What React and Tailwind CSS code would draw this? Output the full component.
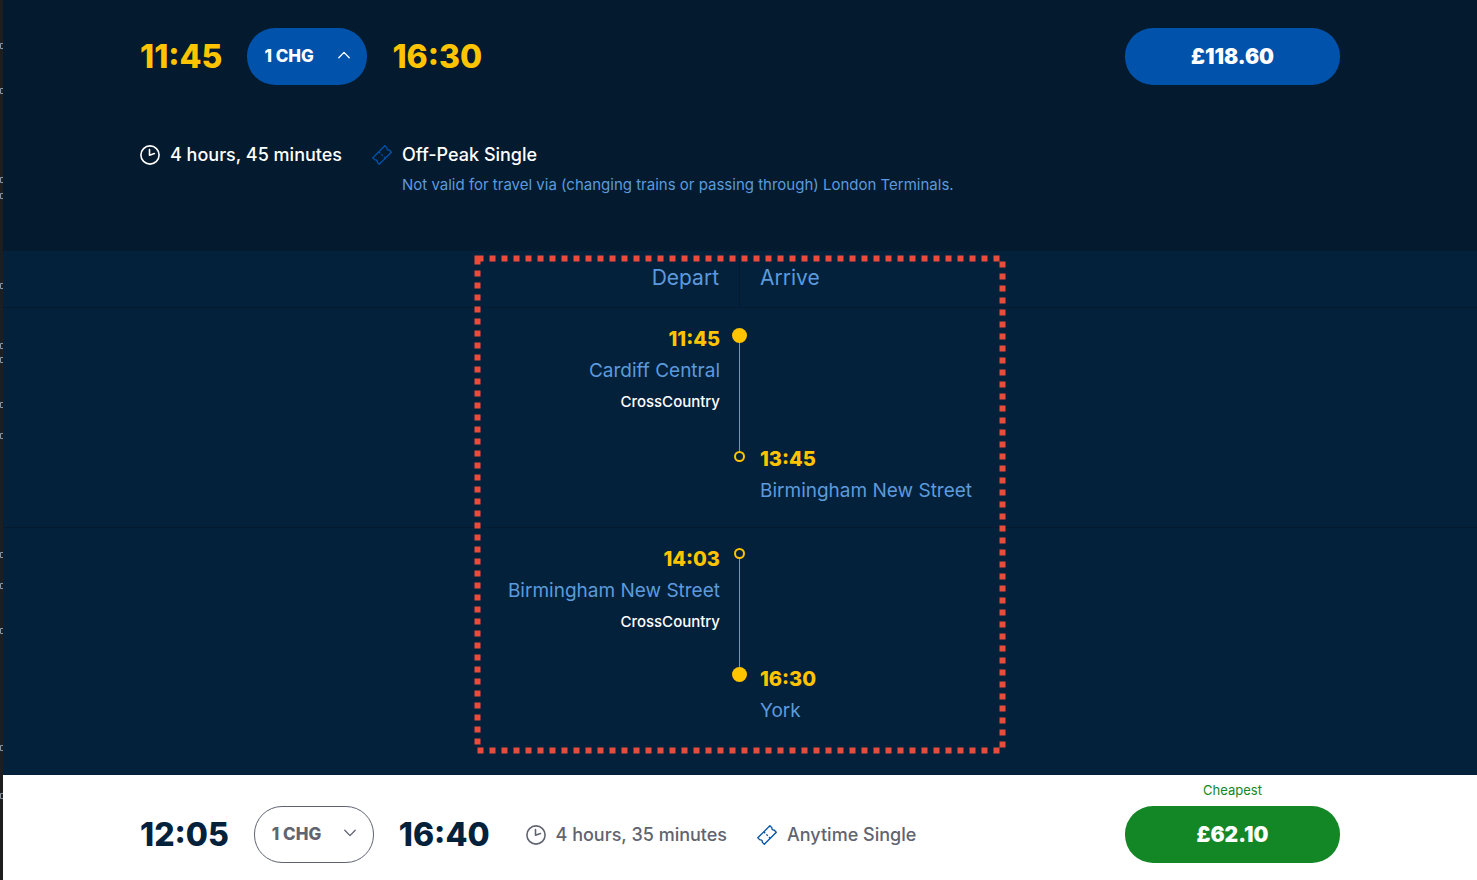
import React from "react";

function ClockIcon() {
  return (
    <svg className="size-5 shrink-0" viewBox="0 0 20 20" fill="none" stroke="currentColor" strokeWidth="1.6" strokeLinecap="round" strokeLinejoin="round" aria-hidden="true">
      <circle cx="10" cy="10" r="9.1" />
      <path d="M9.5 4.6V10.2L14.4 8.6" />
    </svg>
  );
}

function TicketIcon() {
  return (
    <svg className="size-5 shrink-0 text-[#0052aa]" viewBox="0 0 20 20" fill="none" stroke="currentColor" strokeWidth="1.3" strokeLinejoin="round" aria-hidden="true">
      <path d="M12.9 0.8L15 2.9C14.6 4 15.6 5.4 17.1 5L19.3 7.2L7.3 19.2L5.2 17.1C5.6 15.8 4.4 14.4 2.9 14.9L0.8 12.8Z" />
      <path d="M6.9 6.9L8.2 8.2M9.4 9.4L10.8 10.8M12 12L13.2 13.2" />
    </svg>
  );
}

function Chevron({ up }) {
  return (
    <svg className="mb-1 h-2 w-3 shrink-0" viewBox="0 0 12 8" fill="none" stroke="currentColor" strokeWidth="1.3" strokeLinecap="round" strokeLinejoin="round" aria-hidden="true">
      <path d={up ? "M0.8 6.8L6 1.4L11.2 6.8" : "M0.8 1.2L6 6.6L11.2 1.2"} />
    </svg>
  );
}

function ChangeButton({ expanded, className }) {
  return (
    <button
      type="button"
      aria-expanded={expanded}
      className={`flex h-[57px] w-[120px] shrink-0 items-center justify-between rounded-[28px] px-[17px] text-[17px] font-extrabold ${className}`}
    >
      1 CHG
      <Chevron up={expanded} />
    </button>
  );
}

function PriceButton({ children, className }) {
  return (
    <button type="button" className={`h-[57px] w-[215px] rounded-[28px] text-[21px] font-black text-white ${className}`}>
      {children}
    </button>
  );
}

function Time({ children }) {
  return <time className="text-[32px] leading-[57px] font-extrabold">{children}</time>;
}

function Stop({ time, station, operator }) {
  return (
    <div>
      <time className="block text-[20px] leading-[31px] font-extrabold text-[#ffc400]">{time}</time>
      <p className="text-[19px] leading-[31px] text-[#5c9add]">{station}</p>
      {operator && <p className="text-[15px] leading-[31px] font-medium text-white">{operator}</p>}
    </div>
  );
}

function Terminus() {
  return <span className="size-[15px] shrink-0 rounded-full bg-[#ffc400]" />;
}

function Interchange() {
  return <span className="size-[11px] shrink-0 rounded-full border-2 border-[#ffc400]" />;
}

function Leg({ from, to, startsTrip, endsTrip, className }) {
  return (
    <li className={`grid grid-cols-[1fr_40px_1fr] pt-4 ${className}`}>
      <div className="text-right">
        <Stop {...from} />
      </div>
      <div className="row-span-2 ml-3 flex w-[15px] flex-col items-center pt-1 pb-11">
        {startsTrip ? <Terminus /> : <Interchange />}
        <span className="w-px grow bg-[#5c9add]" />
        {endsTrip ? <Terminus /> : <Interchange />}
      </div>
      <div />
      <div />
      <div className="pt-[27px]">
        <Stop {...to} />
      </div>
    </li>
  );
}

const EDGE_MARKS = [43, 88, 177, 193, 283, 343, 357, 402, 433, 552, 583, 628, 745, 793];

export default function App() {
  return (
    <div className="flex min-h-screen bg-[#1e1e1e] font-['Inter','Liberation_Sans',sans-serif] text-base">
      <svg className="h-[880px] w-[3px] shrink-0" viewBox="0 0 3 880" fill="none" stroke="#8795a3" aria-hidden="true">
        {EDGE_MARKS.map((y) => (
          <path key={y} d={`M3 ${y}.5H0.5V${y + 5}.5H3`} />
        ))}
      </svg>
      <main className="flex min-w-0 grow flex-col bg-white">
        <section className="bg-[#041a2e] px-6 pt-7 pb-[51px]">
          <div className="mx-auto max-w-[1200px]">
            <div className="flex items-center gap-[25px] text-[#ffc400]">
              <Time>11:45</Time>
              <ChangeButton expanded className="bg-[#0052aa] text-white" />
              <Time>16:30</Time>
              <div className="ml-auto">
                <PriceButton className="bg-[#0052aa]">£118.60</PriceButton>
              </div>
            </div>
            <div className="mt-[55px] flex gap-[30px] text-[18px] leading-[30px] font-medium text-white">
              <p className="flex h-[30px] items-center gap-[10px]">
                <ClockIcon />
                4 hours, 45 minutes
              </p>
              <div className="flex gap-[10px]">
                <span className="flex h-[30px] items-center">
                  <TicketIcon />
                </span>
                <div>
                  <p>Off-Peak Single</p>
                  <p className="text-[15px] leading-[30px] font-normal text-[#5c9add]">
                    Not valid for travel via (changing trains or passing through) London Terminals.
                  </p>
                </div>
              </div>
            </div>
          </div>
        </section>

        <section className="relative bg-[#04213b] pb-[3px]">
          <div className="grid h-[57px] grid-cols-2 border-b border-[#041a30] text-[21px] leading-[54px] text-[#5c9add]">
            <h2 className="border-r border-[#041a30] pr-5 text-right">Depart</h2>
            <h2 className="pl-5">Arrive</h2>
          </div>
          <ol>
            <Leg
              startsTrip
              className="border-b border-[#041a30] pb-[21px]"
              from={{ time: "11:45", station: "Cardiff Central", operator: "CrossCountry" }}
              to={{ time: "13:45", station: "Birmingham New Street" }}
            />
            <Leg
              endsTrip
              className="pb-[46px]"
              from={{ time: "14:03", station: "Birmingham New Street", operator: "CrossCountry" }}
              to={{ time: "16:30", station: "York" }}
            />
          </ol>
          <svg
            className="pointer-events-none absolute top-1 left-1/2 h-[499px] w-[532px] -translate-x-1/2"
            viewBox="0 0 532 499"
            fill="none"
            aria-hidden="true"
          >
            <rect x="3.5" y="3.5" width="525" height="492" stroke="#ea4c3b" strokeWidth="6" strokeDasharray="6 6" />
          </svg>
        </section>

        <section className="px-6 pb-[17px]">
          <div className="mx-auto flex max-w-[1200px] items-end gap-[25px] text-[#04213b]">
            <Time>12:05</Time>
            <ChangeButton expanded={false} className="border border-[#5f6470] text-[#5f6470]" />
            <Time>16:40</Time>
            <div className="ml-[11px] flex h-[57px] items-center gap-[30px] text-[18px] font-medium text-[#5f6470]">
              <p className="flex items-center gap-[10px]">
                <ClockIcon />
                4 hours, 35 minutes
              </p>
              <p className="flex items-center gap-[10px]">
                <TicketIcon />
                Anytime Single
              </p>
            </div>
            <div className="ml-auto text-center">
              <p className="text-[13px] leading-[31px] text-[#138626]">Cheapest</p>
              <PriceButton className="bg-[#138626]">£62.10</PriceButton>
            </div>
          </div>
        </section>
      </main>
    </div>
  );
}
